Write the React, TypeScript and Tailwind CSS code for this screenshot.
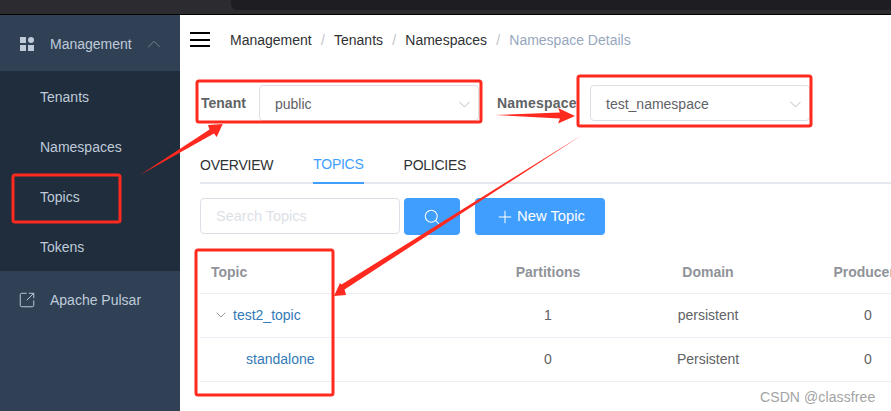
import { ChevronDown, ChevronUp, Plus, Search, SquareArrowOutUpRight } from 'lucide-react';

const submenu = ['Tenants', 'Namespaces', 'Topics', 'Tokens'];

const rows = [
  { name: 'test2_topic', partitions: '1', domain: 'persistent', producers: '0', expand: true },
  { name: 'standalone', partitions: '0', domain: 'Persistent', producers: '0', expand: false },
];

function Sidebar() {
  return (
    <aside className="w-[180px] shrink-0 bg-[#304156]">
      <div className="flex h-[56px] items-center pl-5 pt-[2px] text-sm text-[#bfcbd9]">
        <svg width="14" height="14" viewBox="0 0 14 14" className="mr-4 fill-[#bfcbd9]">
          <rect x="0" y="0" width="6" height="6" />
          <circle cx="11" cy="3" r="3" />
          <rect x="0" y="8" width="6" height="6" />
          <rect x="8" y="8" width="6" height="6" />
        </svg>
        <span>Management</span>
        <ChevronUp size={22} strokeWidth={0.8} className="ml-[11px] text-[#8c96a3]" />
      </div>
      <div className="bg-[#1f2d3d]">
        {submenu.map((item) => (
          <div key={item} className="flex h-[50px] items-center pl-10 pt-[2px] text-sm text-[#bfcbd9]">
            {item}
          </div>
        ))}
      </div>
      <div className="flex h-[58px] items-center pl-5 text-sm text-[#bfcbd9]">
        <SquareArrowOutUpRight size={18} strokeWidth={1.3} className="-ml-[2px] mr-[14px]" />
        <span>Apache Pulsar</span>
      </div>
    </aside>
  );
}

function SelectBox({ value }: { value: string }) {
  return (
    <div className="flex h-9 w-[220px] items-center justify-between rounded border border-[#dcdfe6] pl-[15px] pr-[4px] pt-[2px] text-sm text-[#606266]">
      <span>{value}</span>
      <ChevronDown size={19} strokeWidth={0.9} className="text-[#a0a4ac]" />
    </div>
  );
}

function Annotations() {
  return (
    <svg width="891" height="411" className="pointer-events-none absolute left-0 top-0">
      <g fill="none" stroke="#ff2a1f" strokeWidth="3">
        <rect x="197" y="81" width="284" height="41" rx="2" />
        <rect x="578" y="76" width="233" height="50" rx="2" />
        <rect x="13" y="175" width="107" height="47" rx="2" />
        <rect x="196" y="250" width="137" height="145" rx="2" />
      </g>
      <g fill="#ff2a1f">
        <polygon points="140,175 209.5,129.5 208,125 222.7,124 216.7,137 214,133.5" />
        <polygon points="495,115 560,112.5 558,108 575,116 558,123.5 560,118.5" />
        <polygon points="582,135 344.5,289.5 346,295 334,296 340,283 341.5,284.5" />
      </g>
    </svg>
  );
}

export default function App() {
  return (
    <div className="relative flex h-[411px] w-[891px] flex-col overflow-hidden bg-white font-['Liberation_Sans',Arial,sans-serif]">
      {/* browser chrome left over at the top of the capture */}
      <div className="h-[15px] shrink-0 border-b border-black bg-[#2c2b30]">
        <div className="ml-[231px] h-[10px] rounded-bl-md bg-[#1e1e22]" />
      </div>

      <div className="flex min-h-0 flex-1">
        <Sidebar />

        <main className="min-w-0 flex-1">
          <div className="flex h-[51px] items-center pb-[2px] pl-[10px] text-sm">
            <div className="flex h-[15px] w-5 flex-col justify-between">
              <div className="h-[2px] bg-black" />
              <div className="h-[2px] bg-black" />
              <div className="h-[2px] bg-black" />
            </div>
            <div className="ml-[20px] flex items-center text-[#303133]">
              <span>Management</span>
              <span className="mx-[9.2px] text-[#c0c4cc]">/</span>
              <span>Tenants</span>
              <span className="mx-[9.2px] text-[#c0c4cc]">/</span>
              <span>Namespaces</span>
              <span className="mx-[9.2px] text-[#c0c4cc]">/</span>
              <span className="text-[#97a8be]">Namespace Details</span>
            </div>
          </div>

          <div className="ml-[21px] mt-[19px] flex h-9 w-[800px] items-center text-sm">
            <span className="w-[58px] font-bold text-[#606266]">Tenant</span>
            <SelectBox value="public" />
            <span className="ml-[18px] w-[93px] font-bold tracking-[0.2px] text-[#606266]">Namespace</span>
            <SelectBox value="test_namespace" />
          </div>

          <div className="ml-5 mt-[25px] flex h-[38px] w-[691px] gap-10 border-b-2 border-[#e4e7ed] text-sm tracking-[-0.25px]">
            <span className="flex h-[38px] items-center text-[#303133]">OVERVIEW</span>
            <span className="flex h-[38px] items-center border-b-2 border-[#409eff] text-[#409eff]">TOPICS</span>
            <span className="flex h-[38px] items-center text-[#303133]">POLICIES</span>
          </div>

          <div className="ml-5 mt-[14px] flex items-start">
            <div className="flex h-9 w-[200px] items-center rounded border border-[#dcdfe6] pl-[15px] pt-[1px] text-[14.5px] text-[#dcdfe6]">
              Search Topics
            </div>
            <button className="ml-1 flex h-[37px] w-14 items-center justify-center rounded bg-[#409eff] text-white">
              <Search size={18} strokeWidth={1.4} />
            </button>
            <button className="ml-[15px] flex h-[37px] w-[130px] items-center justify-center gap-[2px] rounded bg-[#409eff] text-[14.8px] text-white">
              <Plus size={20} strokeWidth={1.2} />
              New Topic
            </button>
          </div>

          <div className="ml-5 mt-[15px] w-[760px] text-sm">
            <div className="grid h-[44px] grid-cols-[268px_160px_160px_160px] items-center border-b border-[#ebeef5] pt-[1px] font-bold text-[#909399]">
              <span className="pl-[11px]">Topic</span>
              <span className="text-center">Partitions</span>
              <span className="text-center">Domain</span>
              <span className="text-center">Producers</span>
            </div>
            {rows.map((row) => (
              <div key={row.name} className="grid h-[44px] grid-cols-[268px_160px_160px_160px] items-center border-b border-[#ebeef5] pb-[2px] text-[#606266]">
                <span className="flex items-center pl-[12.5px] text-[#337ab7]">
                  {row.expand ? (
                    <ChevronDown size={16} strokeWidth={1} className="mr-[4.5px] text-[#606266]" />
                  ) : (
                    <span className="w-[33.5px]" />
                  )}
                  {row.name}
                </span>
                <span className="text-center">{row.partitions}</span>
                <span className="text-center">{row.domain}</span>
                <span className="text-center">{row.producers}</span>
              </div>
            ))}
          </div>
        </main>
      </div>

      <Annotations />
      <span className="absolute left-[760px] top-[387px] text-sm tracking-[0.1px] text-[#a3a3a3]">CSDN @classfree</span>
    </div>
  );
}
